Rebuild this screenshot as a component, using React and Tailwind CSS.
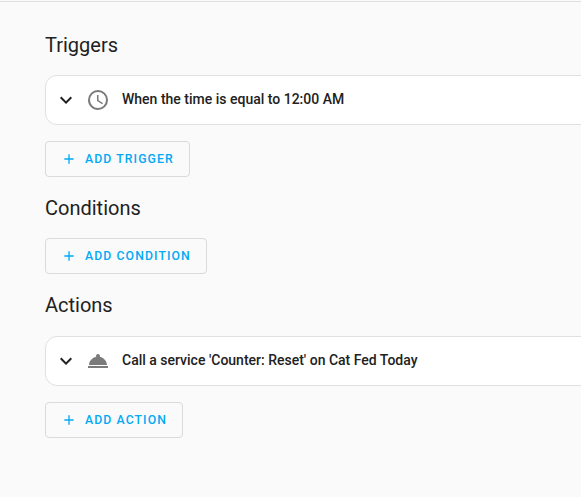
const mdi = {
  chevron: "M7.41,8.58L12,13.17L16.59,8.58L18,10L12,16L6,10L7.41,8.58Z",
  clock: "M12,20A8,8 0 0,0 20,12A8,8 0 0,0 12,4A8,8 0 0,0 4,12A8,8 0 0,0 12,20M12,2A10,10 0 0,1 22,12A10,10 0 0,1 12,22C6.47,22 2,17.5 2,12A10,10 0 0,1 12,2M12.5,7V12.25L17,14.92L16.25,16.15L11,13V7H12.5Z",
  bell: "M2,17H22V19H2V17M13.84,7.79C13.94,7.55 14,7.29 14,7A2,2 0 0,0 12,5A2,2 0 0,0 10,7C10,7.29 10.06,7.55 10.16,7.79C6.25,8.6 3.27,11.93 3,16H21C20.73,11.93 17.75,8.6 13.84,7.79Z",
  plus: "M19,13H13V19H11V13H5V11H11V5H13V11H19V13Z",
};

function Icon({ name, className }) {
  return (
    <svg viewBox="0 0 24 24" fill="currentColor" className={className}>
      <path d={mdi[name]} />
    </svg>
  );
}

function Heading({ children }) {
  return <h2 className="h-7 text-[20px] leading-7 font-normal whitespace-nowrap">{children}</h2>;
}

function Row({ icon, children }) {
  return (
    <div className="flex h-[50px] w-[620px] items-center rounded-xl border border-[#e0e0e0] bg-white pl-2">
      <Icon name="chevron" className="size-6 shrink-0" />
      <Icon name={icon} className="ml-2 size-6 shrink-0 text-[#7b7b7b]" />
      <span className="ml-3 -mt-0.5 text-[14px] leading-5 font-medium whitespace-nowrap">{children}</span>
    </div>
  );
}

function AddButton({ className, children }) {
  return (
    <button
      className={
        "flex h-9 items-center rounded-[4px] border border-[#dadada] pl-[15px] text-[12.25px] font-medium tracking-[1.09px] whitespace-nowrap text-[#03a9f4] " +
        className
      }
    >
      <Icon name="plus" className="mr-2 size-4 shrink-0" />
      {children}
    </button>
  );
}

export default function App() {
  return (
    <div className="h-[497px] w-full overflow-hidden bg-[#fafafa] font-['Roboto',sans-serif] text-[#212121]">
      <div className="h-0.5 border-b border-[#e0e0e0]" />
      <main className="pt-[29px] pl-[45px]">
        <Heading>Triggers</Heading>
        <div className="mt-4">
          <Row icon="clock">When the time is equal to 12:00 AM</Row>
        </div>
        <AddButton className="mt-4 w-[145px]">ADD TRIGGER</AddButton>
        <div className="mt-[17px]">
          <Heading>Conditions</Heading>
        </div>
        <AddButton className="mt-4 w-[162px]">ADD CONDITION</AddButton>
        <div className="mt-[17px]">
          <Heading>Actions</Heading>
        </div>
        <div className="mt-[17px]">
          <Row icon="bell">Call a service 'Counter: Reset' on Cat Fed Today</Row>
        </div>
        <AddButton className="mt-4 w-[138px]">ADD ACTION</AddButton>
      </main>
    </div>
  );
}
